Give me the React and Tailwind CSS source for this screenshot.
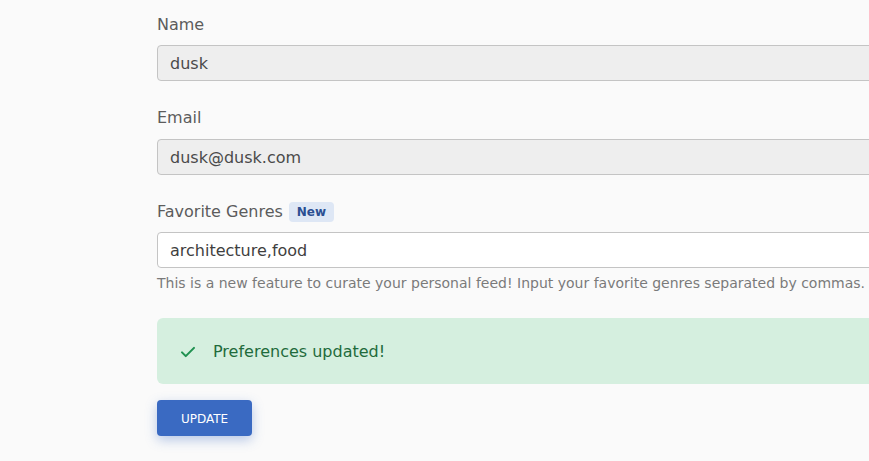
export default function App() {
  return (
    <div className="w-full h-[461px] overflow-hidden bg-[#fafafa]" style={{ fontFamily: '"DejaVu Sans", sans-serif' }}>
      <div className="ml-[157px] w-[800px] pt-[13px]">
        <label className="block text-[16px] leading-6 text-[#5c5c5c]">Name</label>
        <div className="mt-[8px] h-9 rounded border border-[#c4c4c4] bg-[#eeeeee] pl-3 pt-px flex items-center text-[16px] text-[#4a4a4a]">dusk</div>

        <label className="mt-[25px] block text-[16px] leading-6 text-[#5c5c5c]">Email</label>
        <div className="mt-[9px] h-9 rounded border border-[#c4c4c4] bg-[#eeeeee] pl-3 pt-px flex items-center text-[16px] text-[#4a4a4a]">dusk@dusk.com</div>

        <div className="mt-6 flex items-center h-6 text-[16px] text-[#5c5c5c]">
          <span className="pt-[2px]">Favorite Genres</span>
          <span className="ml-[6px] mt-px h-5 px-2 rounded bg-[#dee7f5] text-[#2b4f92] text-[12px] font-bold flex items-center">New</span>
        </div>
        <div className="mt-[9px] h-9 rounded border border-[#c4c4c4] bg-white pl-3 pt-px flex items-center text-[16px] text-[#3f3f3f]">architecture,food</div>
        <p className="mt-[5px] text-[14px] leading-5 text-[#7a7a7a] whitespace-nowrap">This is a new feature to curate your personal feed! Input your favorite genres separated by commas.</p>

        <div className="mt-[25px] h-[66px] rounded-md bg-[#d5efdf] flex items-center pl-[22px] pt-px">
          <svg width="18" height="18" viewBox="0 0 24 24" fill="none" stroke="#1f9150" strokeWidth="2.8" strokeLinecap="round" strokeLinejoin="round">
            <path d="M4 12.5l5 5L20 6.5" />
          </svg>
          <span className="ml-4 text-[16px] text-[#1f6b3c]">Preferences updated!</span>
        </div>

        <button className="mt-4 w-[95px] h-9 pt-px rounded bg-[#3a6ac2] text-white text-[12px] shadow-[0_4px_12px_rgba(58,106,194,0.35)]">UPDATE</button>
      </div>
    </div>
  );
}
